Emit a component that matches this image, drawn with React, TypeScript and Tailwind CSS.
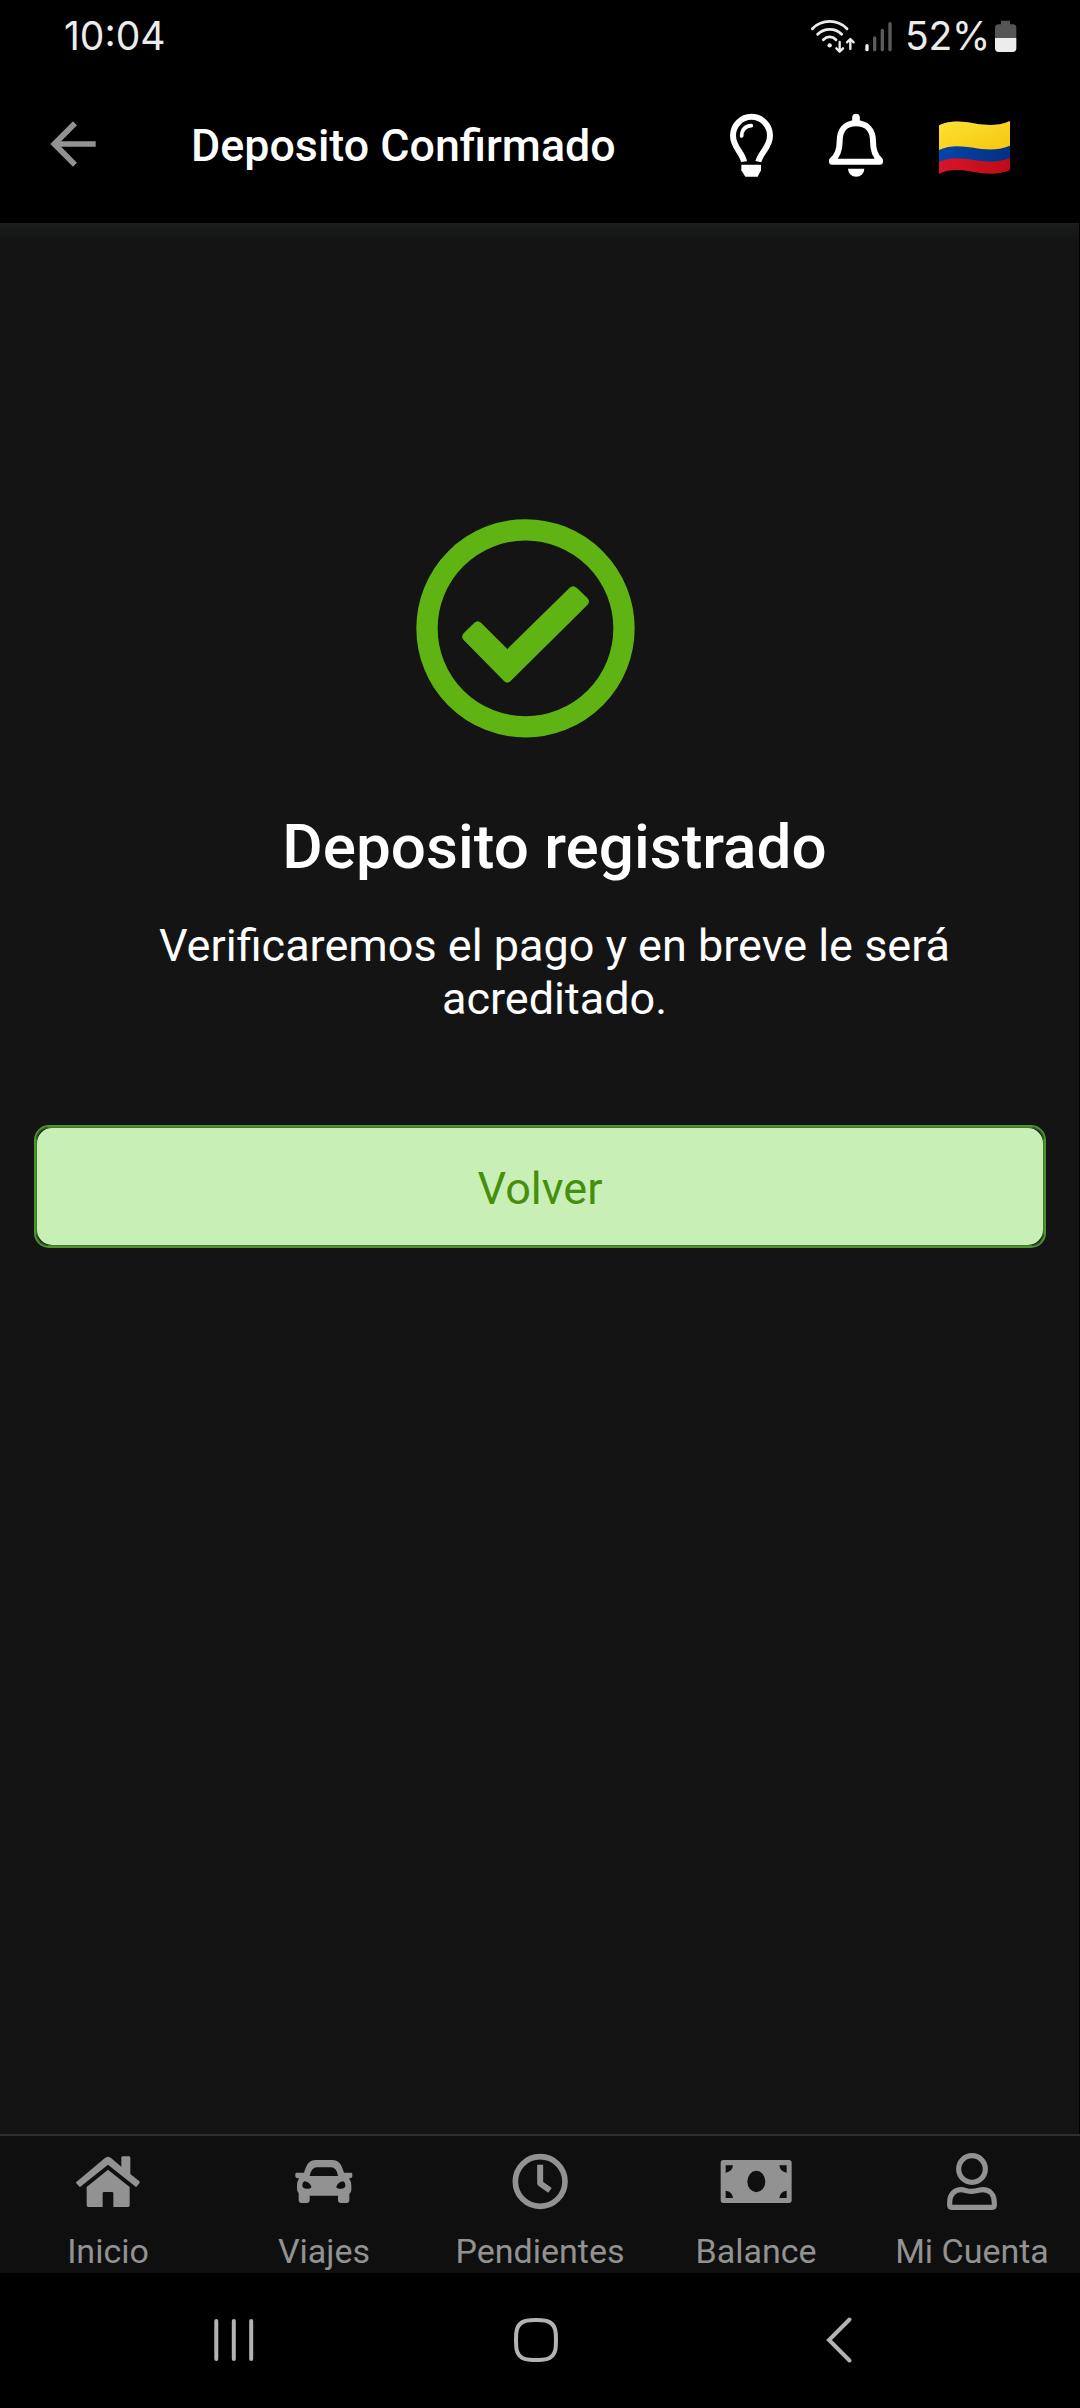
import type { ReactNode } from "react";

const StatusBar = () => (
  <div className="h-[72px] flex-shrink-0 flex items-start justify-between pl-[64px] pr-[63px] font-['Inter',sans-serif] text-[#ececec]">
    <div className="pt-[12px] text-[39px] leading-[48px]">10:04</div>
    <div className="flex items-start">
      <svg className="mt-[19px] w-[46px] h-[35px]" viewBox="90 57 138 105" fill="none" stroke="currentColor" strokeWidth="8.5" strokeLinecap="round" strokeLinejoin="round">
        <path d="M97 86C126 57 172 57 201 86" />
        <path d="M113 103C133 83 166 83 185 103" />
        <path d="M130 119C141 108 157 108 168 119" />
        <circle cx="149" cy="136" r="6.5" fill="currentColor" stroke="none" />
        <path d="M179 126V153M169 145L179 155L189 145M211 147V120M201 127L211 117L221 127" strokeWidth="7" />
      </svg>
      <svg className="ml-[8px] mt-[20px] w-[29px] h-[32px]" viewBox="252 60 87 96" fill="none" strokeWidth="10" strokeLinecap="round">
        <path d="M261 137V149" stroke="#ececec" />
        <path d="M284 114V149M307 91V149M330 71V149" stroke="#5b5b5b" />
      </svg>
      <div className="ml-[12px] w-[89px] pt-[12px] text-[39px] leading-[48px] tracking-[-0.3px]">52%</div>
      <svg className="mt-[20px] w-[23px] h-[33px]" viewBox="642 60 69 99">
        <path d="M663 62H690V73H698Q709 73 709 84V114H645V84Q645 73 656 73H663Z" fill="#555" />
        <path d="M645 114H709V145Q709 156 698 156H656Q645 156 645 145Z" fill="#ececec" />
      </svg>
    </div>
  </div>
);

const Header = () => (
  <div className="h-[151px] flex-shrink-0 flex items-center pl-[39px] pb-[8px] pr-[69px]">
    <svg className="w-[68px] h-[68px]" viewBox="0 0 24 24" fill="#929292">
      <path d="M20 11H7.83l5.59-5.59L12 4l-8 8 8 8 1.41-1.41L7.83 13H20v-2z" />
    </svg>
    <h1 className="ml-[84px] mt-[4px] flex-grow text-[44.8px] leading-[52px] font-medium text-white whitespace-nowrap">
      Deposito Confirmado
    </h1>
    <div className="flex items-center text-white">
      <svg className="mt-[4px] w-[45px] h-[65px]" viewBox="117 70 135 195" fill="none" stroke="currentColor" strokeWidth="18">
        <path d="M162 216C158 190 129 172 129 138A55 56 0 0 1 240 138C240 172 211 190 205 216" />
        <path d="M155 139Q156 110 184 108" strokeWidth="11" strokeLinecap="round" />
        <path d="M154 225H213V242L203 261H166L154 242Z" fill="currentColor" stroke="none" />
      </svg>
      <svg className="ml-[54px] mt-[4px] w-[56px] h-[65px]" viewBox="414 70 168 195" fill="none" stroke="currentColor" strokeWidth="18" strokeLinejoin="round">
        <path d="M426 216H570V212C556 200 549 185 549 155C549 120 530 101 498 101C466 101 449 120 449 155C449 185 442 200 426 212Z" />
        <path d="M498 84V98" strokeWidth="23" strokeLinecap="round" />
        <path d="M474 237H523A24.5 24.5 0 0 1 474 237Z" fill="currentColor" stroke="none" />
      </svg>
      <svg className="ml-[54px] mt-[8px] w-[73px] h-[55px]" viewBox="744 90 219 165">
        <defs>
          <linearGradient id="flagYellow" x1="0" y1="0" x2="1" y2="1">
            <stop offset="0" stopColor="#ffe033" />
            <stop offset="1" stopColor="#f4c70f" />
          </linearGradient>
          <linearGradient id="flagBlue">
            <stop offset="0" stopColor="#0545a5" />
            <stop offset="1" stopColor="#052f83" />
          </linearGradient>
          <linearGradient id="flagRed">
            <stop offset="0" stopColor="#d9142b" />
            <stop offset="1" stopColor="#bd0c15" />
          </linearGradient>
        </defs>
        <path d="M747 106C820 72 880 128 960 93V240C880 274 820 218 747 251Z" fill="url(#flagRed)" />
        <path d="M747 106C820 72 880 128 960 93V204C880 236 820 184 747 216Z" fill="url(#flagBlue)" />
        <path d="M747 106C820 72 880 128 960 93V167C880 200 820 147 747 180Z" fill="url(#flagYellow)" />
      </svg>
    </div>
  </div>
);

const Confirmation = () => (
  <main className="flex-grow flex flex-col border-r border-black bg-[#141414] bg-[linear-gradient(#1b1d1c,#141414_16px)] pl-[34px] pr-[33px] pt-[294px]">
    <svg className="ml-[380px] w-[223px] h-[223px]" viewBox="42 51 669 669">
      <circle cx="376.5" cy="385" r="295.5" fill="none" stroke="#5fb414" strokeWidth="64" />
      <path
        d="M322 447L509 263Q519 254 530 263L562 294Q572 304 562 315L332 543Q322 553 312 543L191 420Q182 410 191 400L223 368Q233 359 243 368Z"
        fill="#5fb414"
      />
    </svg>
    <div className="pl-[29px] flex flex-col items-center text-center text-white">
      <h2 className="mt-[71px] text-[62px] leading-[72px] font-medium">Deposito registrado</h2>
      <p className="mt-[36px] w-[860px] text-[45px] leading-[53px]">
        Verificaremos el pago y en breve le será acreditado.
      </p>
    </div>
    <div className="mt-[100px] h-[123px] rounded-[15px] border-2 border-[#4c922d]">
      <div className="h-full rounded-[13px] border border-[#3d7a22]">
        <button type="button" className="w-full h-full pt-[4px] rounded-[15px] bg-[#c8efb5] text-[45px] text-[#468f0d]">
          Volver
        </button>
      </div>
    </div>
  </main>
);

const TABS: { label: string; icon: ReactNode }[] = [
  {
    label: "Inicio",
    icon: (
      <svg className="w-[66px] h-[60px]" viewBox="225 93 198 180" fill="currentColor">
        <path d="M229 186L314 115Q324 105 334 115L364 140V113Q364 109 368 109H387Q391 109 391 113V162L418 184Q421 187 418 190L411 199Q408 202 405 199L324 134L243 199Q240 202 237 199L229 190Q227 188 229 186Z" />
        <path d="M324 149L389 201V256Q389 261 384 261H340V220Q340 216 336 216H312Q308 216 308 220V261H265Q260 261 260 256V201Z" />
      </svg>
    ),
  },
  {
    label: "Viajes",
    icon: (
      <svg className="w-[60px] h-[60px]" viewBox="884 93 180 180" fill="currentColor" fillRule="evenodd">
        <path d="M914 158C922 132 930 120 950 120H998C1018 120 1026 132 1034 158H1055Q1059 158 1059 162V168Q1059 175 1049 175Q1056 185 1056 196V210Q1056 218 1050 222V240Q1050 249 1041 249H1025Q1016 249 1016 240V227H931V240Q931 249 922 249H907Q898 249 898 240V220Q893 215 893 207V196Q893 185 899 175Q888 175 888 168V162Q888 158 892 158ZM931 168H1016Q1012 142 995 142H953Q936 142 931 168ZM915 184Q908 188 909 197Q910 206 922 206Q936 206 936 200Q930 185 915 184ZM1032 184Q1017 185 1011 200Q1011 206 1025 206Q1037 206 1038 197Q1039 188 1032 184Z" />
      </svg>
    ),
  },
  {
    label: "Pendientes",
    icon: (
      <svg className="w-[60px] h-[60px]" viewBox="451 93 180 180" fill="none" stroke="currentColor">
        <circle cx="541.5" cy="184.5" r="74.5" strokeWidth="17" />
        <path d="M541.5 134V190L571 211" strokeWidth="18" strokeLinejoin="round" />
      </svg>
    ),
  },
  {
    label: "Balance",
    icon: (
      <svg className="w-[72px] h-[60px]" viewBox="61 93 216 180" fill="currentColor" fillRule="evenodd">
        <path d="M71 120H268Q276 120 276 128V241Q276 249 268 249H71Q63 249 63 241V128Q63 120 71 120ZM78 136V158Q98 156 100 136ZM261 136H239Q241 156 261 158ZM78 234H100Q98 214 78 212ZM261 234V212Q241 214 239 234ZM170 152.5A27 32 0 1 0 170 216.500A27 32 0 1 0 170 152.5Z" />
      </svg>
    ),
  },
  {
    label: "Mi Cuenta",
    icon: (
      <svg className="w-[60px] h-[60px]" viewBox="726 93 180 180" fill="none" stroke="currentColor" strokeWidth="15.5">
        <circle cx="816" cy="147" r="40" />
        <path d="M749 256V248C749 222 765 209 784 209C795 209 800 214 816 214C832 214 838 209 848 209C868 209 883 222 883 248V256Q883 262 877 262H755Q749 262 749 256Z" />
      </svg>
    ),
  },
];

const TabBar = () => (
  <nav className="h-[139px] flex-shrink-0 grid grid-cols-5 border-t-2 border-[#2d2e36] bg-[#0f0f0f] text-[#929292]">
    {TABS.map((tab) => (
      <div key={tab.label} className="flex flex-col items-center pt-[15px]">
        {tab.icon}
        <span className="mt-[20px] text-[34px] leading-[40px] whitespace-nowrap">{tab.label}</span>
      </div>
    ))}
  </nav>
);

const SystemNav = () => (
  <div className="h-[135px] flex-shrink-0 flex items-start pt-[43px] pl-[212px] text-[#b3b3b3]">
    <svg className="w-[44px] h-[48px]" viewBox="0 0 44 48" stroke="currentColor" strokeWidth="4" strokeLinecap="round">
      <path d="M4.3 5V43M21.8 5V43M39.2 5V43" />
    </svg>
    <svg className="ml-[256px] w-[48px] h-[48px]" viewBox="0 0 48 48" fill="none" stroke="currentColor" strokeWidth="4">
      <path d="M18 4.200Q24 3.800 30 4.200C39 4.600 43.400 9 43.800 18Q44.200 24 43.800 30C43.400 39 39 43.400 30 43.800Q24 44.200 18 43.800C9 43.400 4.600 39 4.200 30Q3.800 24 4.200 18C4.600 9 9 4.600 18 4.200Z" />
    </svg>
    <svg className="ml-[263px] w-[32px] h-[48px]" viewBox="0 0 32 48" fill="none" stroke="currentColor" strokeWidth="4" strokeLinecap="round">
      <path d="M26.5 3.5L6 24L26.5 44.5" />
    </svg>
  </div>
);

export default function App() {
  return (
    <div className="w-[1080px] h-[2408px] flex flex-col overflow-hidden bg-black font-['Roboto',sans-serif]">
      <StatusBar />
      <Header />
      <Confirmation />
      <TabBar />
      <SystemNav />
    </div>
  );
}
